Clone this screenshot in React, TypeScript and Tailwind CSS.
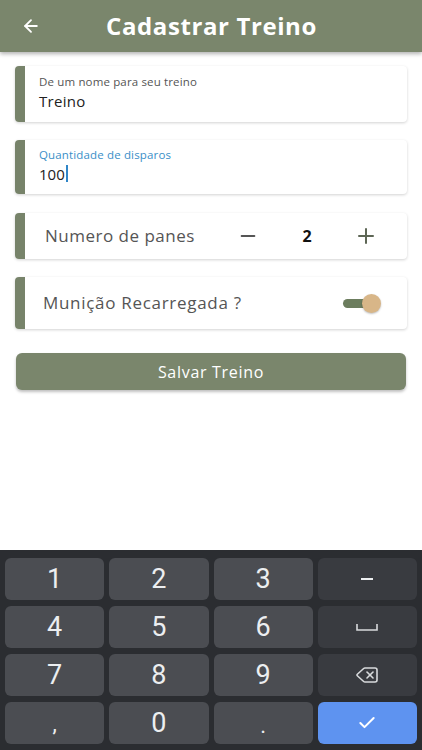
import { ArrowLeft, Check, Delete, Minus, Plus } from "lucide-react";

const card = "flex items-stretch rounded-[4px] bg-white shadow-[0_1px_3px_rgba(0,0,0,0.18)] overflow-hidden";
const bar = "w-[10px] shrink-0 bg-[#77836a]";

function Key({ label, dark, blue, children }: { label?: string; dark?: boolean; blue?: boolean; children?: React.ReactNode }) {
  const bg = blue ? "bg-[#5e93f0]" : dark ? "bg-[#393b40]" : "bg-[#4b4d52]";
  return (
    <div className={`flex h-[42px] items-center justify-center rounded-[6px] text-[27px] text-[#eceef0] ${bg}`}>
      {children ?? label}
    </div>
  );
}

export default function App() {
  return (
    <main className="flex h-screen flex-col bg-white" style={{ fontFamily: "'Open Sans', sans-serif" }}>
      <header className="relative flex h-[52px] shrink-0 items-center bg-[#7a866c] shadow-[0_2px_4px_rgba(0,0,0,0.3)]">
        <ArrowLeft className="absolute left-[21px] h-[20px] w-[20px] text-white" strokeWidth={2.2} />
        <h1 className="w-full pl-[1px] text-center text-[24px] font-bold tracking-[0.6px] text-white">Cadastrar Treino</h1>
      </header>

      <section className="flex flex-col px-[15px] pt-[14px]">
        <div className={`${card} h-[56px]`}>
          <div className={bar} />
          <div className="flex flex-col justify-center pb-[4px] pl-[14px]">
            <p className="text-[11.5px] leading-[14px] tracking-[0.15px] text-[#555]">De um nome para seu treino</p>
            <p className="mt-[3px] text-[15px] leading-[18px] tracking-[0.3px] text-[#222]">Treino</p>
          </div>
        </div>

        <div className={`${card} mt-[18px] h-[54px]`}>
          <div className={bar} />
          <div className="flex flex-col justify-center pb-[4px] pl-[14px]">
            <p className="text-[11.5px] leading-[14px] tracking-[0.15px] text-[#3a8fc8]">Quantidade de disparos</p>
            <p className="mt-[3px] flex items-center text-[15px] leading-[18px] text-[#222]">100<span className="ml-[1px] inline-block h-[17px] w-[2px] bg-[#2f86c8]" /></p>
          </div>
        </div>

        <div className={`${card} mt-[19px] h-[46px]`}>
          <div className={bar} />
          <div className="flex flex-1 items-center pl-[20px]">
            <p className="w-[192px] text-[17px] tracking-[0.5px] text-[#555]">Numero de panes</p>
            <Minus className="h-[22px] w-[22px] text-[#555]" strokeWidth={2} />
            <span className="ml-[40px] w-[16px] text-center text-[16px] font-bold text-[#111]">2</span>
            <Plus className="ml-[39px] h-[24px] w-[24px] text-[#5d6655]" strokeWidth={2} />
          </div>
        </div>

        <div className={`${card} mt-[18px] h-[52px]`}>
          <div className={bar} />
          <div className="flex flex-1 items-center pl-[18px]">
            <p className="flex-1 text-[17px] tracking-[0.7px] text-[#555]">Munição Recarregada ?</p>
            <div className="relative mr-[26px] h-[18px] w-[38px]">
              <div className="absolute left-0 top-[5px] h-[9px] w-[34px] rounded-full bg-[#6c7d5e]" />
              <div className="absolute right-0 top-0 h-[19px] w-[19px] rounded-full bg-[#d8b688] shadow-[0_1px_2px_rgba(0,0,0,0.25)]" />
            </div>
          </div>
        </div>

        <button className="mx-[1px] mt-[24px] h-[37px] rounded-[6px] bg-[#7a866c] text-[16px] tracking-[0.7px] text-white shadow-[0_2px_3px_rgba(0,0,0,0.25)]">Salvar Treino</button>
      </section>

      <footer className="mt-auto grid h-[200px] shrink-0 grid-cols-4 gap-x-[5px] gap-y-[6px] bg-[#2b2d31] px-[5px] pb-[6px] pt-[8px]" style={{ fontFamily: "Roboto, sans-serif" }}>
        <Key label="1" />
        <Key label="2" />
        <Key label="3" />
        <Key dark><span className="block h-[2px] w-[12px] bg-[#eceef0]" /></Key>
        <Key label="4" />
        <Key label="5" />
        <Key label="6" />
        <Key dark>
          <svg width="22" height="10" viewBox="0 0 22 10" fill="none" stroke="#d8dadc" strokeWidth="1.6"><path d="M1 2v6h20V2" /></svg>
        </Key>
        <Key label="7" />
        <Key label="8" />
        <Key label="9" />
        <Key dark><Delete className="h-[24px] w-[26px] text-[#d8dadc]" strokeWidth={1.6} /></Key>
        <Key><span className="mt-[0px] text-[22px]">,</span></Key>
        <Key label="0" />
        <Key><span className="mt-[4px] text-[22px]">.</span></Key>
        <Key blue><Check className="h-[20px] w-[20px] text-white" strokeWidth={2.4} /></Key>
      </footer>
    </main>
  );
}
